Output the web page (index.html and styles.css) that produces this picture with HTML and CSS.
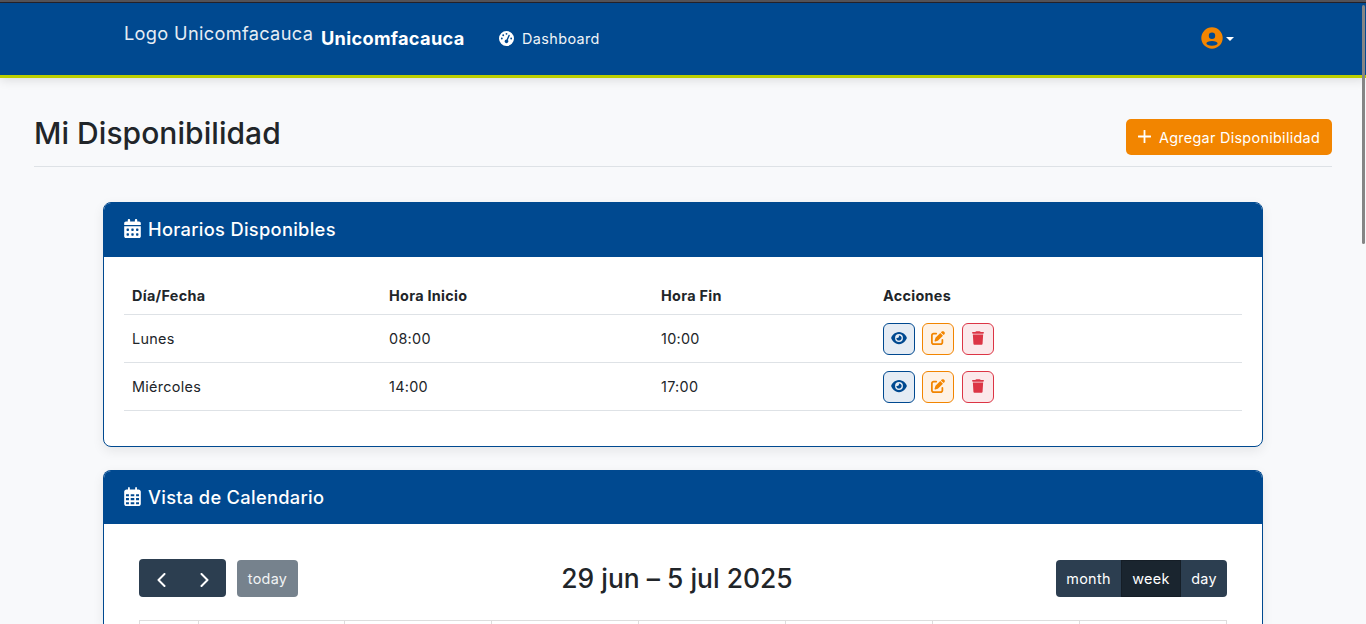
FILE: index.html
```html
<!DOCTYPE html>
<html lang="es">
<head>
<meta charset="utf-8">
<title>Mi Disponibilidad</title>
<link rel="stylesheet" href="styles.css">
</head>
<body>
<svg class="defs" width="0" height="0">
  <symbol id="eye" viewBox="0 0 576 512"><path d="M288 32c-80.8 0-145.5 36.8-192.6 80.6C48.6 156 17.3 208 2.5 243.7c-3.3 7.9-3.3 16.7 0 24.6C17.3 304 48.6 356 95.4 399.4C142.5 443.2 207.2 480 288 480s145.5-36.8 192.6-80.6c46.8-43.5 78.1-95.4 93-131.1c3.3-7.9 3.3-16.7 0-24.6c-14.9-35.7-46.2-87.7-93-131.1C433.5 68.8 368.8 32 288 32zM144 256a144 144 0 1 1 288 0 144 144 0 1 1 -288 0zm144-64c0 35.3-28.7 64-64 64c-7.1 0-13.9-1.2-20.3-3.3c-5.5-1.8-11.9 1.6-11.7 7.4c.3 6.9 1.3 13.8 3.2 20.7c13.7 51.2 66.4 81.6 117.6 67.9s81.6-66.4 67.9-117.6c-11.1-41.5-47.8-69.4-88.6-71.1c-5.8-.2-9.2 6.1-7.4 11.7c2.1 6.4 3.3 13.2 3.3 20.3z"/></symbol>
  <symbol id="edit" viewBox="0 0 512 512"><path d="M471.6 21.7c-21.9-21.9-57.3-21.9-79.2 0L362.3 51.7l97.9 97.9 30.1-30.1c21.9-21.9 21.9-57.3 0-79.2L471.6 21.7zm-299.2 220c-6.1 6.1-10.8 13.6-13.5 21.9l-29.6 88.8c-2.9 8.6-.6 18.1 5.8 24.6s15.9 8.7 24.6 5.8l88.8-29.6c8.2-2.7 15.7-7.4 21.9-13.5L437.7 172.3 339.7 74.3 172.4 241.7zM96 64C43 64 0 107 0 160V416c0 53 43 96 96 96H352c53 0 96-43 96-96V320c0-17.7-14.3-32-32-32s-32 14.3-32 32v96c0 17.7-14.3 32-32 32H96c-17.7 0-32-14.3-32-32V160c0-17.7 14.3-32 32-32h96c17.7 0 32-14.3 32-32s-14.3-32-32-32H96z"/></symbol>
  <symbol id="trash" viewBox="0 0 448 512"><path d="M135.2 17.7L128 32H32C14.3 32 0 46.3 0 64S14.3 96 32 96H416c17.7 0 32-14.3 32-32s-14.3-32-32-32H320l-7.2-14.3C307.4 6.8 296.3 0 284.2 0H163.8c-12.1 0-23.2 6.8-28.6 17.7zM416 128H32L53.2 467c1.6 25.3 22.6 45 47.9 45H346.9c25.3 0 46.3-19.7 47.9-45L416 128z"/></symbol>
</svg>

<div class="window-edge"></div>
<nav class="navbar">
  <span class="logo">Logo Unicomfacauca</span>
  <span class="brand">Unicomfacauca</span>
  <span class="nav-link">
    <svg width="15" height="15" viewBox="0 0 512 512"><path d="M0 256a256 256 0 1 1 512 0A256 256 0 1 1 0 256zM288 96a32 32 0 1 0 -64 0 32 32 0 1 0 64 0zM256 416c35.3 0 64-28.7 64-64c0-17.4-6.9-33.1-18.1-44.6L366 161.7c5.3-12.1-.2-26.3-12.3-31.6s-26.3 .2-31.6 12.3L257.9 288c-.6 0-1.3 0-1.9 0c-35.3 0-64 28.7-64 64s28.7 64 64 64zM176 144a32 32 0 1 0 -64 0 32 32 0 1 0 64 0zM96 288a32 32 0 1 0 0-64 32 32 0 1 0 0 64zm352-32a32 32 0 1 0 -64 0 32 32 0 1 0 64 0z"/></svg>
    <span class="dashboard">Dashboard</span>
  </span>
  <span class="user">
    <svg class="avatar" width="22" height="22" viewBox="0 0 22 22"><path fill-rule="evenodd" d="M11 .3a10.7 10.7 0 1 0 0 21.4A10.7 10.7 0 0 0 11 .3zM11 5.6a3.2 3.2 0 1 1 0 6.4 3.2 3.2 0 0 1 0-6.4zM11 14c3.300 0 5.600 1 5.600 2.300S14.300 18.800 11 18.800 5.400 17.600 5.400 16.300 7.700 14 11 14z"/></svg>
    <span class="caret"></span>
  </span>
</nav>

<header class="page-head">
  <h1>Mi Disponibilidad</h1>
  <button class="btn-add"><svg width="13" height="13" viewBox="0 0 13 13"><path d="M6.500 .5v12M.5 6.500h12"/></svg><span>Agregar Disponibilidad</span></button>
</header>

<main class="content">
  <section class="card schedule">
    <h2 class="card-head">
      <svg width="17" height="19" viewBox="0 0 448 512"><path d="M128 0c17.700 0 32 14.300 32 32V64H288V32c0-17.700 14.300-32 32-32s32 14.300 32 32V64h48c26.500 0 48 21.500 48 48v48H0V112C0 85.500 21.500 64 48 64H96V32c0-17.700 14.300-32 32-32zM0 192H448V464c0 26.500-21.500 48-48 48H48c-26.500 0-48-21.500-48-48V192zm64 80v32c0 8.800 7.200 16 16 16h32c8.800 0 16-7.200 16-16V272c0-8.800-7.200-16-16-16H80c-8.800 0-16 7.200-16 16zm128 0v32c0 8.800 7.200 16 16 16h32c8.800 0 16-7.200 16-16V272c0-8.800-7.200-16-16-16H208c-8.800 0-16 7.200-16 16zm144-16c-8.800 0-16 7.200-16 16v32c0 8.800 7.200 16 16 16h32c8.800 0 16-7.200 16-16V272c0-8.800-7.200-16-16-16H336zM64 400v32c0 8.800 7.200 16 16 16h32c8.800 0 16-7.200 16-16V400c0-8.800-7.200-16-16-16H80c-8.800 0-16 7.200-16 16zm144-16c-8.800 0-16 7.200-16 16v32c0 8.800 7.200 16 16 16h32c8.800 0 16-7.200 16-16V400c0-8.800-7.200-16-16-16H208zm112 16v32c0 8.800 7.200 16 16 16h32c8.800 0 16-7.200 16-16V400c0-8.800-7.200-16-16-16H336c-8.800 0-16 7.200-16 16z"/></svg>
      <span>Horarios Disponibles</span>
    </h2>
    <table class="slots">
      <colgroup><col class="c-day"><col class="c-start"><col class="c-end"><col></colgroup>
      <thead><tr><th>Día/Fecha</th><th>Hora Inicio</th><th>Hora Fin</th><th>Acciones</th></tr></thead>
      <tbody>
        <tr><td>Lunes</td><td>08:00</td><td>10:00</td><td><div class="actions">
          <button class="act view"><svg width="16" height="14"><use href="#eye"/></svg></button>
          <button class="act edit"><svg width="14" height="14"><use href="#edit"/></svg></button>
          <button class="act del"><svg width="12" height="14"><use href="#trash"/></svg></button></div></td></tr>
        <tr><td>Miércoles</td><td>14:00</td><td>17:00</td><td><div class="actions">
          <button class="act view"><svg width="16" height="14"><use href="#eye"/></svg></button>
          <button class="act edit"><svg width="14" height="14"><use href="#edit"/></svg></button>
          <button class="act del"><svg width="12" height="14"><use href="#trash"/></svg></button></div></td></tr>
      </tbody>
    </table>
  </section>

  <section class="card calendar">
    <h2 class="card-head">
      <svg width="17" height="19" viewBox="0 0 448 512"><path d="M152 24c0-13.300-10.700-24-24-24s-24 10.700-24 24V64H64C28.700 64 0 92.700 0 128v16 48V448c0 35.300 28.700 64 64 64H384c35.300 0 64-28.700 64-64V192 144 128c0-35.300-28.700-64-64-64H344V24c0-13.300-10.700-24-24-24s-24 10.700-24 24V64H152V24zM48 192h80v56H48V192zm0 104h80v64H48V296zm128 0h96v64H176V296zm144 0h80v64H320V296zm80-48H320V192h80v56zm0 160v40c0 8.800-7.200 16-16 16H320V408h80zm-128 0v56H176V408h96zm-144 0v56H64c-8.800 0-16-7.200-16-16V408h80zM272 248H176V192h96v56z"/></svg>
      <span>Vista de Calendario</span>
    </h2>
    <div class="cal-body">
      <div class="toolbar">
        <div class="tools-left">
          <div class="arrows">
            <button><svg width="9" height="14" viewBox="0 0 9 14"><path d="M7.500 1L1.500 7l6 6"/></svg></button>
            <button><svg width="9" height="14" viewBox="0 0 9 14"><path d="M1.500 1l6 6-6 6"/></svg></button>
          </div>
          <button class="today">today</button>
        </div>
        <h3>29 jun – 5 jul 2025</h3>
        <div class="views"><button class="month">month</button><button class="week">week</button><button class="day">day</button></div>
      </div>
      <div class="grid"><i></i><i></i><i></i><i></i><i></i><i></i><i></i><i></i></div>
    </div>
  </section>
</main>
<div class="scroll-thumb"></div>
</body>
</html>
```
FILE: styles.css
```css
* { box-sizing: border-box; }
html { overflow: hidden; }
body {
  margin: 0;
  height: 624px;
  display: flex;
  flex-direction: column;
  overflow: hidden;
  background: #f8f9fb;
  color: #212529;
  font: 14.4px/1.5 Inter, sans-serif;
  letter-spacing: .3px;
}
h1, h2, h3 { margin: 0; font-weight: 480; }
button { font: inherit; letter-spacing: inherit; border: 0; padding: 0; margin: 0; display: flex; align-items: center; justify-content: center; }
svg { display: block; flex: none; fill: currentColor; }
.defs { position: absolute; }
.window-edge { flex: none; height: 3px; background: #56545a; border-bottom: 1px solid #26232b; }

.navbar {
  flex: none;
  height: 75px;
  display: flex;
  align-items: center;
  padding: 0 132px 0 124px;
  background: #004990;
  border-bottom: 3px solid #bccf00;
  box-shadow: 0 2px 10px rgba(0, 0, 0, .12);
  color: #fff;
  white-space: nowrap;
}
.logo { width: 197px; font-size: 18.2px; letter-spacing: .33px; padding-bottom: 10px; color: #e6edf4; }
.brand { width: 178px; font-size: 18.2px; font-weight: 700; letter-spacing: .3px; }
.nav-link { display: flex; align-items: center; gap: 8px; }
.nav-link svg { margin-bottom: 1px; }
.dashboard { letter-spacing: .4px; color: #f0f4f8; }
.user { margin-left: auto; display: flex; align-items: center; gap: 3px; padding-bottom: 2px; }
.avatar { color: #f28500; }
.caret { border: 4.5px solid transparent; border-top-color: #fff; border-bottom: 0; margin-top: 2px; }

.page-head {
  flex: none;
  height: 89px;
  margin: 0 34px;
  padding-top: 41px;
  display: flex;
  justify-content: space-between;
  align-items: flex-start;
  border-bottom: 1px solid #dee2e6;
}
h1 { font-size: 30px; line-height: 28px; letter-spacing: .05px; }
.btn-add {
  width: 206px;
  height: 36px;
  gap: 8px;
  padding-top: 1px;
  border-radius: 5px;
  background: #f28500;
  color: #fff;
  white-space: nowrap;
}
.btn-add svg { stroke: #fff; stroke-width: 1.8; stroke-linecap: round; margin-bottom: 2px; }

.content { flex: 1; min-height: 0; width: 1160px; margin: 35px auto 0; display: flex; flex-direction: column; gap: 23px; }
.card {
  background: #fff;
  border: 1px solid #004990;
  border-radius: 8px;
  box-shadow: 0 4px 12px rgba(0, 0, 0, .08);
  overflow: hidden;
}
.schedule { flex: none; height: 245px; }
.calendar { flex: 1; min-height: 0; border-bottom: 0; border-radius: 8px 8px 0 0; }
.card-head {
  height: 54px;
  padding: 0 20px 1px;
  display: flex;
  align-items: center;
  gap: 7px;
  background: #004990;
  color: #fff;
  font-size: 18.3px;
}
.card-head svg { margin-bottom: 2px; }
.calendar .card-head { height: 53px; padding-bottom: 0; }

.slots { width: 1118px; margin: 19px 20px; border-collapse: collapse; table-layout: fixed; }
.c-day { width: 257px; }
.c-start { width: 272px; }
.c-end { width: 222px; }
.slots th, .slots td { padding: 0 8px; text-align: left; border-bottom: 1px solid #dee2e6; }
.slots th { height: 38px; padding-top: 3px; font-weight: 700; }
.slots td { height: 48px; padding-top: 1px; }
.actions { display: flex; gap: 7.400px; }
.act { width: 32px; height: 32px; padding-bottom: 1px; border: 1px solid; border-radius: 6px; }
.view { color: #004990; background: #e5ecf4; }
.edit { color: #f28500; background: #fef2e5; }
.del { color: #dc3545; background: #fbe9eb; }

.cal-body { padding: 35px; }
.toolbar { height: 38px; display: flex; align-items: flex-end; justify-content: space-between; }
.tools-left { display: flex; align-items: flex-end; gap: 11px; }
.arrows { width: 87px; height: 38px; display: flex; border-radius: 4px; background: #2c3e50; }
.arrows button { flex: 1; background: none; padding: 3px 0 0 1px; }
.arrows path { fill: none; stroke: #fff; stroke-width: 2; stroke-linecap: round; stroke-linejoin: round; }
.today { width: 61px; height: 37px; padding-top: 1px; border-radius: 4px; background: #76828d; color: #f1f3f4; }
h3 { font-size: 26.4px; line-height: 38px; white-space: nowrap; letter-spacing: .02px; }
.views { display: flex; height: 37px; border-radius: 4px; overflow: hidden; background: #2c3e50; }
.views button { background: none; color: #fff; padding-top: 1px; }
.views .month { width: 65px; }
.views .week { width: 60px; background: #1a252f; border: 1px solid #151e27; }
.views .day { width: 46px; }
.grid { margin-top: 23px; height: 60px; display: grid; grid-template-columns: 57.500px repeat(7, 1fr); border: 1px solid #ddd; }
.grid i + i { border-left: 1px solid #ddd; }

.scroll-thumb { position: absolute; left: 1362px; top: 5px; width: 3px; height: 239px; border-radius: 2px; background: #858585; }
```
